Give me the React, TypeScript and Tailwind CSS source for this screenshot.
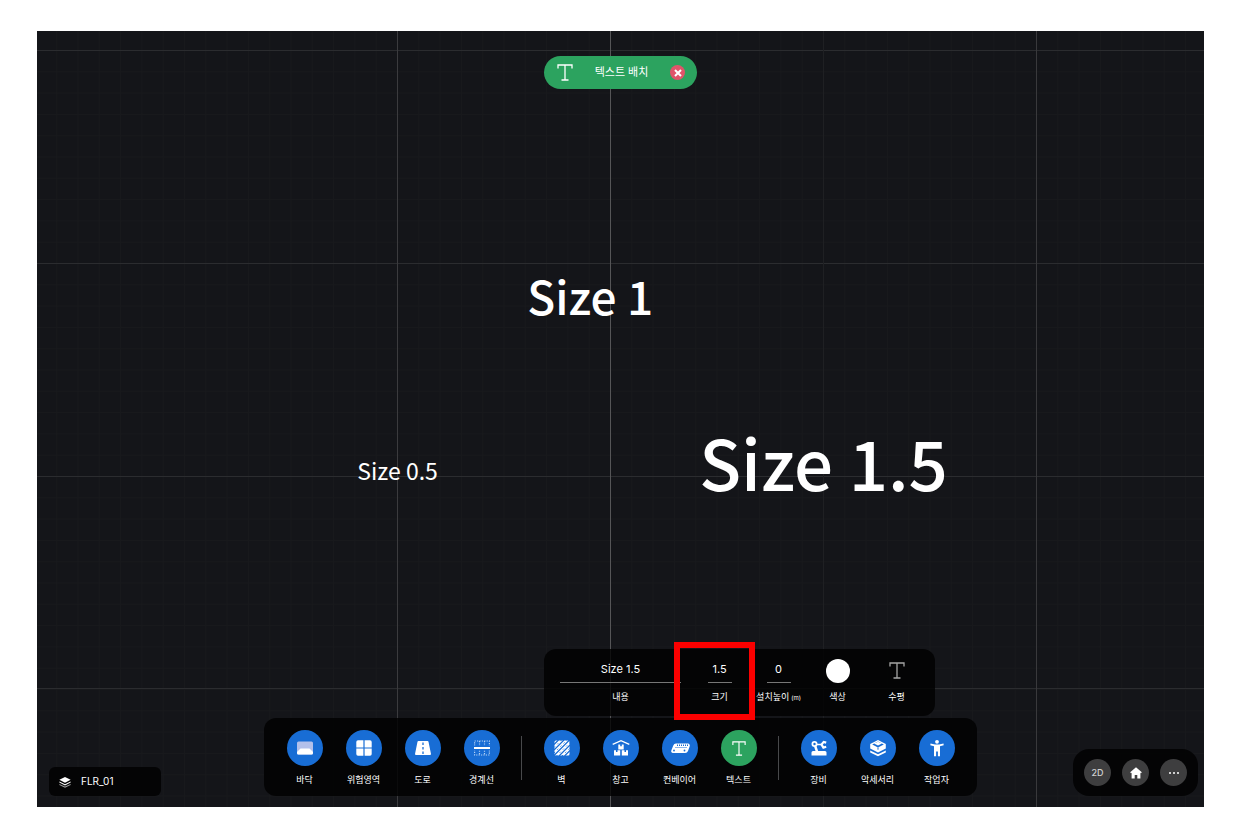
import { useState, type ReactNode } from 'react';

function TextIcon({ className }: { className?: string }) {
  return (
    <svg viewBox="0 0 16 17" fill="none" stroke="currentColor" className={className}>
      <path d="M1 4.500V1h14v3.500M8 1v15M4.500 16h7" strokeWidth="1.300" />
    </svg>
  );
}

const icons = {
  floor: (
    <>
      <rect x="0" y="1.500" width="16" height="13" rx="1.500" fill="#b3c0ea" />
      <path d="M3.500 8.500h9L16 12v1a1.500 1.500 0 0 1-1.500 1.500h-13A1.500 1.500 0 0 1 0 13v-1z" fill="white" />
    </>
  ),
  danger: (
    <>
      <path d="M2 .3h5.400v7.100H.3V2A1.700 1.700 0 0 1 2 .3z" />
      <path d="M8.600.3H14A1.700 1.700 0 0 1 15.700 2v5.400H8.600z" />
      <path d="M.3 8.600h7.100v7.100H2A1.700 1.700 0 0 1 .3 14z" />
      <path d="M8.600 8.600h7.100V14a1.700 1.700 0 0 1-1.700 1.700H8.600z" />
    </>
  ),
  road: (
    <>
      <path d="M3.500 1h9a1 1 0 0 1 1 .8L16 14a1 1 0 0 1-1 1H1a1 1 0 0 1-1-1L2.500 1.800a1 1 0 0 1 1-.8z" />
      <path d="M8 2.500v2.500M8 7v2.500M8 11.500V14" stroke="#186dd5" strokeWidth="1.300" />
    </>
  ),
  boundary: (
    <>
      <path d="M.6 1h14.800v14H.6zM5.500 1v14M10.500 1v14" fill="none" stroke="#b5d2f6" strokeWidth="1.200" strokeDasharray="1.200 1.200" />
      <rect x="0" y="5.500" width="16" height="5" fill="#186dd5" />
      <rect x="0" y="7" width="16" height="2" />
    </>
  ),
  wall: (
    <>
      <rect x="0.500" y="0.500" width="15" height="15" rx="1.500" />
      <path
        d="M0 4.500L4.500 0M0 10L10 0M0 15.500L15.500 0M5 16L16 5M10.500 16L16 10.500"
        stroke="#186dd5"
        strokeWidth="1.200"
      />
      <path d="M0 7.500L7.500 0M0 13L13 0M2.500 16L16 2.500M8 16L16 8" stroke="#186dd5" strokeWidth=".8" strokeDasharray="1.500 3" />
    </>
  ),
  warehouse: (
    <>
      <path d="M-.3 4.300L8 .6l8.300 3.700" fill="none" stroke="currentColor" strokeWidth="1.300" />
      <path d="M5.300 4.500h1.900v1.800h1.600V4.500h1.900v5H5.300z" />
      <path d="M1 10.300h2v1.800h1.500v-1.800h2.700v5.200H1zM8.800 10.300h2.700v1.800H13v-1.800h2v5.200H8.800z" />
    </>
  ),
  conveyor: (
    <>
      <path d="M4 3.500h12a2 2 0 0 1 1.700 2.700L16 11a3 3 0 0 1-2.800 2H1A1.800 1.800 0 0 1-.7 10.500L1.300 5.500a3 3 0 0 1 2.700-2z" />
      <path d="M5 5.200h11" stroke="#186dd5" strokeWidth="1.400" strokeDasharray="1 1" />
      <path d="M3.500 7.500h11" stroke="#186dd5" strokeWidth="1" strokeDasharray="1 1" />
      <circle cx="2" cy="10.500" r=".9" fill="#186dd5" />
      <circle cx="12.500" cy="10.500" r=".9" fill="#186dd5" />
    </>
  ),
  robot: (
    <>
      <path d="M.5 12.500a1.500 1.500 0 0 1 1.500-1.500h12a1.500 1.500 0 0 1 1.500 1.500v3H.5z" />
      <path d="M4 5.500l2 6" stroke="currentColor" strokeWidth="2.400" />
      <path d="M5 4.500h5" stroke="currentColor" strokeWidth="1.500" />
      <circle cx="3.500" cy="4" r="2.100" fill="none" stroke="currentColor" strokeWidth="1.800" />
      <path d="M15.200 2.600L12.700 1.900 10.500 4.600l1.900 3 2.800-.8" fill="none" stroke="currentColor" strokeWidth="2.200" />
    </>
  ),
  accessory: (
    <>
      <path d="M8 0l7.800 4v4.500L8 12.500.2 8.500V4z" />
      <path d="M2.200 4.500L8 1.600l5.800 2.900L8 7.400z" fill="#186dd5" />
      <path d="M4 3.600L8 1.700l4 1.900-4 1.900z" fill="white" />
      <path d="M.2 10.500L8 14.200l7.800-3.700v1.900L8 16.300.2 12.400z" />
      <path d="M8 7.500v2.200" stroke="#186dd5" strokeWidth="1" />
    </>
  ),
  worker: (
    <>
      <circle cx="8" cy="1.800" r="1.900" />
      <path d="M1.500 3.600L6 4.400h4l4.500-.8.200 1.700-3.700 1V16.300H8.900v-4.800H7.100v4.800H5V6.300l-3.700-1z" />
    </>
  ),
};

type IconName = keyof typeof icons;

const areaTools: { label: string; icon: IconName }[] = [
  { label: '바닥', icon: 'floor' },
  { label: '위험영역', icon: 'danger' },
  { label: '도로', icon: 'road' },
  { label: '경계선', icon: 'boundary' },
];

const structureTools: { label: string; icon: IconName }[] = [
  { label: '벽', icon: 'wall' },
  { label: '창고', icon: 'warehouse' },
  { label: '컨베이어', icon: 'conveyor' },
];

const objectTools: { label: string; icon: IconName }[] = [
  { label: '장비', icon: 'robot' },
  { label: '악세서리', icon: 'accessory' },
  { label: '작업자', icon: 'worker' },
];

function ToolButton({ label, active, children }: { label: string; active?: boolean; children: ReactNode }) {
  return (
    <button className="flex w-[59px] flex-col items-center gap-2">
      <span className={`flex size-9 items-center justify-center rounded-full ${active ? 'bg-[#2ca35f]' : 'bg-[#186dd5]'}`}>
        {children}
      </span>
      <span className="text-[9px] leading-3">{label}</span>
    </button>
  );
}

function ToolGroup({ tools }: { tools: { label: string; icon: IconName }[] }) {
  return tools.map((tool) => (
    <ToolButton key={tool.label} label={tool.label}>
      <svg viewBox="0 0 16 16" fill="currentColor" className="size-4 overflow-visible">
        {icons[tool.icon]}
      </svg>
    </ToolButton>
  ));
}

function Divider() {
  return <span className="mx-[10px] mt-1.5 h-11 w-px bg-[#48494b]" />;
}

function Field({ id, label, unit, children }: { id: string; label: string; unit?: string; children: ReactNode }) {
  return (
    <div className="relative flex w-[59px] flex-col items-center gap-2">
      {children}
      <label htmlFor={id} className="text-[9px] leading-3 whitespace-nowrap">
        {label}
        {unit && <span className="ml-0.5 text-[6px]">{unit}</span>}
      </label>
    </div>
  );
}

function PropertyPanel() {
  const [content, setContent] = useState('Size 1.5');
  const [size, setSize] = useState('1.5');
  const [height, setHeight] = useState('0');

  return (
    <div className="mr-[42px] flex self-end rounded-xl bg-black/80 pt-[9px] pr-[9px] pb-3 pl-4">
      <div className="mr-[9px] flex w-[121px] flex-col items-center gap-2">
        <input
          id="content"
          value={content}
          onChange={(e) => setContent(e.target.value)}
          className="h-[25px] w-full border-b border-[#777] pb-0.5 text-center text-[11px] outline-none"
        />
        <label htmlFor="content" className="text-[9px] leading-3">내용</label>
      </div>
      <Field id="size" label="크기">
        <input
          id="size"
          value={size}
          onChange={(e) => setSize(e.target.value)}
          className="h-[25px] w-6 border-b border-[#777] pb-0.5 text-center text-[11px] outline-none"
        />
        <span className="pointer-events-none absolute -top-4 -right-1.5 -bottom-4 -left-4 z-10 border-[6px] border-[#fb0000]" />
      </Field>
      <Field id="height" label="설치높이" unit="(m)">
        <input
          id="height"
          value={height}
          onChange={(e) => setHeight(e.target.value)}
          className="h-[25px] w-6 border-b border-[#777] pb-0.5 text-center text-[11px] outline-none"
        />
      </Field>
      <Field id="color" label="색상">
        <span className="flex h-[25px] items-center">
          <button id="color" className="size-6 rounded-full bg-white" />
        </span>
      </Field>
      <Field id="align" label="수평">
        <button id="align" className="flex h-[25px] items-center text-[#a5a5a5]">
          <TextIcon className="h-[17px] w-4" />
        </button>
      </Field>
    </div>
  );
}

function Grid() {
  return (
    <svg className="absolute inset-0 h-full w-full" shapeRendering="crispEdges">
      <defs>
        <pattern id="minor" x="360" y="19" width="21.300" height="21.300" patternUnits="userSpaceOnUse">
          <path d="M.5 0v21.300M0 .5h21.300" stroke="#18191c" />
        </pattern>
      </defs>
      <rect width="100%" height="100%" fill="url(#minor)" />
      <g fill="#2b2c2f">
        <rect y="19" width="100%" height="1" />
        <rect y="232" width="100%" height="1" />
        <rect y="445" width="100%" height="1" />
        <rect y="657" width="100%" height="1" />
      </g>
      <rect x="786" width="1" height="100%" fill="#1f2023" />
      <rect x="360" width="1" height="100%" fill="#3b3b3e" />
      <rect x="573" width="1" height="100%" fill="#555557" />
      <rect x="999" width="1" height="100%" fill="#39393c" />
    </svg>
  );
}

export default function App() {
  return (
    <main className="flex min-h-screen bg-white pt-[31px] pr-[30px] pb-[17px] pl-[37px] font-[Inter,'Noto_Sans_CJK_KR',sans-serif] text-white">
      <section className="relative flex flex-1 flex-col justify-between overflow-hidden bg-[#141519]">
        <Grid />

        <div className="absolute inset-0 font-['Noto_Sans_CJK_KR',sans-serif] leading-none whitespace-nowrap">
          <span className="absolute top-[34%] left-[47.4%] -translate-1/2 text-[46px] font-medium">Size 1</span>
          <span className="absolute top-[56.6%] left-[30.9%] -translate-1/2 text-[23px]">Size 0.5</span>
          <span className="absolute top-[55.4%] left-[67.4%] -translate-1/2 text-[69px] font-medium">Size 1.5</span>
        </div>

        <header className="relative flex justify-center pt-[25px]">
          <div className="flex h-[33px] items-center gap-[22px] rounded-full bg-[#2ca35f] pr-3 pl-[13px]">
            <TextIcon className="h-[17px] w-4" />
            <span className="text-[11px]">텍스트 배치</span>
            <button aria-label="닫기" className="flex size-[15px] items-center justify-center rounded-full bg-[#e0546a]">
              <svg viewBox="0 0 8 8" className="size-2" stroke="currentColor" strokeWidth="2">
                <path d="M1 1l6 6M7 1L1 7" />
              </svg>
            </button>
          </div>
        </header>

        <footer className="relative grid grid-cols-[1fr_auto_1fr] items-end px-1.5 pb-[11px]">
          <button className="ml-1.5 flex h-[29px] w-28 items-center gap-[10px] rounded-md bg-black/80 pr-3 pl-2 text-[10px]">
            <svg viewBox="0 0 10 10" fill="currentColor" className="ml-0.5 size-3">
              <path d="M5 .8l4.700 2.400L5 5.600.3 3.200z" />
              <path d="M.3 4.500L5 6.800l4.700-2.300v1L5 7.900.3 5.500z" />
              <path d="M.3 6.600L5 8.800l4.700-2.200v.9L5 9.800.3 7.500z" opacity=".6" />
            </svg>
            FLR_01
          </button>

          <div className="flex flex-col gap-0.5">
            <PropertyPanel />
            <nav className="flex rounded-xl bg-black/80 px-[11px] pt-3 pb-[10px]">
              <ToolGroup tools={areaTools} />
              <Divider />
              <ToolGroup tools={structureTools} />
              <ToolButton label="텍스트" active>
                <TextIcon className="h-[15px] w-[14px]" />
              </ToolButton>
              <Divider />
              <ToolGroup tools={objectTools} />
            </nav>
          </div>

          <div className="flex gap-[11px] justify-self-end rounded-2xl bg-black/80 px-[11px] py-[10px]">
            <button className="flex size-[27px] items-center justify-center rounded-full bg-[#3e3e3f] text-[9px] font-medium text-[#d0d0d0]">
              2D
            </button>
            <button aria-label="홈" className="flex size-[27px] items-center justify-center rounded-full bg-[#3e3e3f]">
              <svg viewBox="0 0 12 12" fill="currentColor" className="size-3">
                <path d="M6 .3l5.800 5-.8 1-.6-.5v5.700H7.300V8H4.700v3.500H1.600V5.800l-.6.500-.8-1z" />
              </svg>
            </button>
            <button aria-label="더보기" className="flex size-[27px] items-center justify-center rounded-full bg-[#3e3e3f]">
              <svg viewBox="0 0 12 4" fill="currentColor" className="h-1 w-3">
                <circle cx="2" cy="2" r="1" />
                <circle cx="6" cy="2" r="1" />
                <circle cx="10" cy="2" r="1" />
              </svg>
            </button>
          </div>
        </footer>
      </section>
    </main>
  );
}
